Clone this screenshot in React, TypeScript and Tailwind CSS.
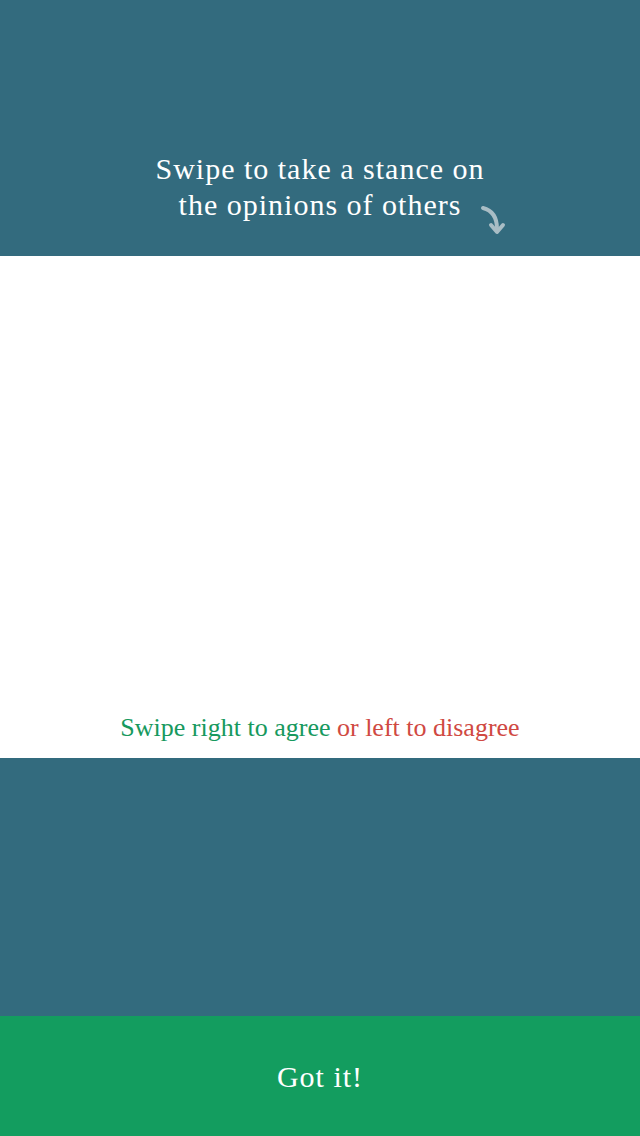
export default function App() {
  const serif = { fontFamily: '"Liberation Serif", "DejaVu Serif", serif' };
  return (
    <div className="flex h-[1136px] w-[640px] flex-col" style={serif}>
      <div className="flex h-[256px] flex-col items-center justify-end bg-[#336b7e] pb-[33px]">
        <div className="text-center text-[30px] leading-[36px] tracking-[1px] text-white">
          <div>Swipe to take a stance on</div>
          <div className="relative inline-block">
            the opinions of others
            <svg
              className="absolute left-full top-[18px] ml-[19px]"
              width="30"
              height="32"
              viewBox="0 0 30 32"
              fill="none"
            >
              <path d="M3 3 C 11 5, 17 11, 17 24" stroke="#a9bdc5" strokeWidth="4" strokeLinecap="round" />
              <path d="M11 20 L17 27 L23 20" stroke="#a9bdc5" strokeWidth="4" strokeLinecap="round" strokeLinejoin="round" />
            </svg>
          </div>
        </div>
      </div>
      <div className="flex h-[502px] flex-col items-center justify-end bg-white pb-[12px]">
        <div className="text-[26px] leading-[36px]">
          <span className="text-[#17995e]">Swipe right to agree </span>
          <span className="text-[#d04942]">or left to disagree</span>
        </div>
      </div>
      <div className="h-[258px] bg-[#336b7e]" />
      <button
        className="flex h-[120px] items-center justify-center bg-[#139d5f] text-[30px] tracking-[1px] text-white"
        style={serif}
      >
        Got it!
      </button>
    </div>
  );
}
